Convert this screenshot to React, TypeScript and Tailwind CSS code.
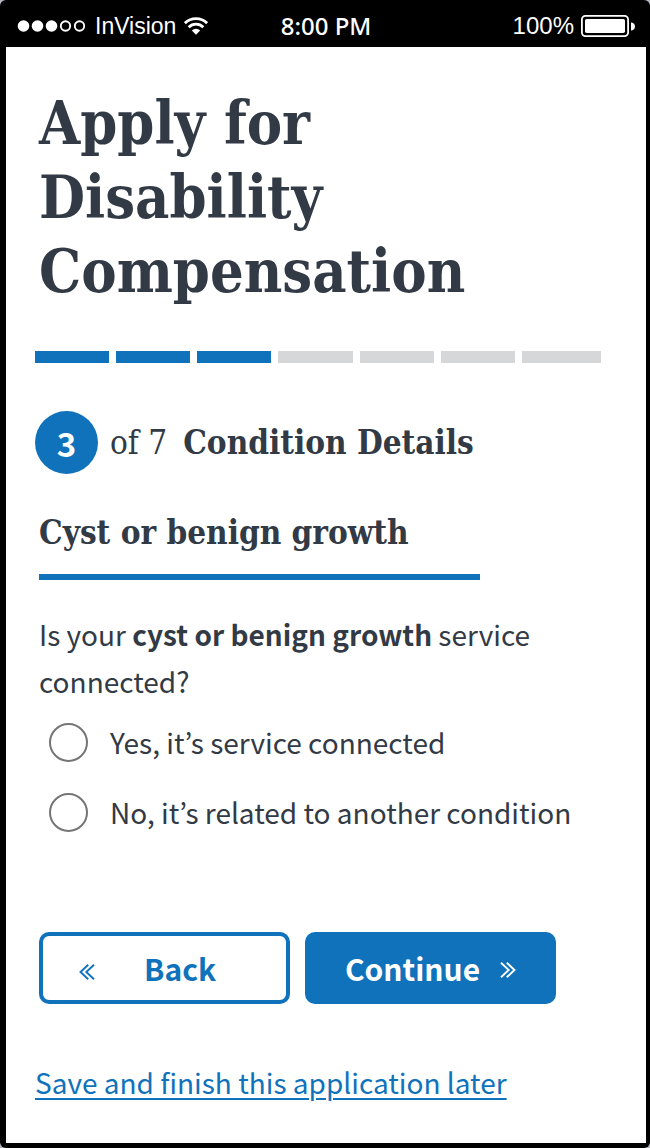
import { useState } from "react";

const TOTAL_STEPS = 7;
const CURRENT_STEP = 3;

const OPTIONS = [
  { value: "yes", label: "Yes, it’s service connected" },
  { value: "no", label: "No, it’s related to another condition" },
];

function StatusBar() {
  return (
    <header className="grid h-[47px] grid-cols-[1fr_auto_1fr] items-center pt-1 pr-[11px] pl-[11px] font-['Liberation_Sans',sans-serif] text-[24px] leading-7 text-white">
      <div className="flex items-center gap-2">
        <svg className="h-3 w-[70px]" viewBox="0 0 70 12" aria-hidden="true">
          <g fill="#fff">
            <circle cx="6.500" cy="6" r="5.800" />
            <circle cx="20.500" cy="6" r="5.800" />
            <circle cx="34.500" cy="6" r="5.800" />
          </g>
          <g fill="none" stroke="#fff" strokeWidth="1.900">
            <circle cx="48.500" cy="6" r="4.700" />
            <circle cx="62.500" cy="6" r="4.700" />
          </g>
        </svg>
        <span className="text-[23px]">InVision</span>
        <svg className="h-[18px] w-6" viewBox="0 0 24 18" aria-hidden="true">
          <g fill="none" stroke="#fff" strokeWidth="2.800">
            <path d="M0.900 6.200a15.800 15.800 0 0 1 22.200 0" />
            <path d="M4.700 10.200a10.400 10.400 0 0 1 14.600 0" />
          </g>
          <path d="M12 17.800L7.800 13.500a6 6 0 0 1 8.400 0z" fill="#fff" />
        </svg>
      </div>
      <span className="font-['Noto_Sans',sans-serif] font-medium">8:00 PM</span>
      <div className="flex items-center justify-end gap-[7px]">
        <span>100%</span>
        <svg className="h-[22px] w-[54px]" viewBox="0 0 54 22" aria-hidden="true">
          <rect x="0.900" y="0.900" width="46.200" height="20.200" rx="3.600" fill="none" stroke="#fff" strokeWidth="1.800" />
          <rect x="4" y="4" width="40" height="14" rx="1.800" fill="#fff" />
          <path d="M50 7.500c2 0 4 1.500 4 4s-2 4-4 4z" fill="#fff" />
        </svg>
      </div>
    </header>
  );
}

function ProgressBar() {
  return (
    <div
      role="progressbar"
      aria-valuemin={1}
      aria-valuemax={TOTAL_STEPS}
      aria-valuenow={CURRENT_STEP}
      className="mt-[42px] flex gap-[7px]"
    >
      {Array.from({ length: TOTAL_STEPS }, (_, i) => (
        <span
          key={i}
          className={
            i < CURRENT_STEP
              ? "h-3 flex-[74] bg-[#1072ba]"
              : "h-3 flex-[74] bg-[#d6d7d9] last:flex-[79]"
          }
        />
      ))}
    </div>
  );
}

export default function App() {
  const [answer, setAnswer] = useState("");

  return (
    <div className="bg-[#b5b8c0]">
      <div className="flex min-h-screen flex-col rounded-md bg-black pr-1 pb-[5px] pl-1.5">
        <StatusBar />
        <main className="flex-1 bg-white pt-10 pr-[45px] pb-8 pl-[29px] font-['Noto_Sans_CJK_KR',sans-serif] text-[28px] text-[#323a45]">
          <h1 className="max-w-[480px] pl-1 font-['DejaVu_Serif_Condensed','DejaVu_Serif',serif] text-[59px] leading-[74px] font-bold">
            Apply for Disability Compensation
          </h1>
          <ProgressBar />

          <div className="mt-12 flex items-center gap-3 font-['DejaVu_Serif_Condensed','DejaVu_Serif',serif] text-[33px] leading-10">
            <span className="flex size-[63px] items-center justify-center rounded-full bg-[#1072ba] font-['Noto_Sans_CJK_KR',sans-serif] font-bold text-white">
              {CURRENT_STEP}
            </span>
            <span>of {TOTAL_STEPS}</span>
            <h2 className="pl-1 font-bold">Condition Details</h2>
          </div>

          <form className="px-1" onSubmit={(e) => e.preventDefault()}>
            <h3 className="mt-[37px] w-[441px] max-w-full border-b-[6px] border-[#1072ba] pb-[19px] font-['DejaVu_Serif_Condensed','DejaVu_Serif',serif] text-[33px] leading-11 font-bold">
              Cyst or benign growth
            </h3>

            <fieldset className="mt-[31px]">
              <legend className="leading-[47px]">
                Is your <strong className="font-bold">cyst or benign growth</strong> service connected?
              </legend>
              <div className="flex flex-col gap-[31px] pt-[18px] pl-2.5">
                {OPTIONS.map((option) => (
                  <label key={option.value} className="flex items-center gap-[22px] leading-[39px]">
                    <input
                      type="radio"
                      name="service-connected"
                      value={option.value}
                      checked={answer === option.value}
                      onChange={() => setAnswer(option.value)}
                      className="size-[39px] shrink-0 appearance-none rounded-full border-2 border-[#757575] bg-white checked:border-[#1072ba] checked:bg-[#1072ba]"
                    />
                    {option.label}
                  </label>
                ))}
              </div>
            </fieldset>

            <div className="mt-[100px] flex gap-[15px] text-[30px] leading-10 font-bold">
              <button type="button" className="flex h-[72px] w-[251px] items-center rounded-[10px] border-4 border-[#1072ba] bg-white pl-9 text-[#1072ba]">
                <svg className="mt-2 h-4 w-4" viewBox="0 0 16 16" fill="none" stroke="currentColor" strokeWidth="1.900" aria-hidden="true">
                  <path d="M9.200 0.800L1.500 8l7.700 7.200M15 0.800L7.300 8l7.700 7.200" />
                </svg>
                <span className="pl-[49px]">Back</span>
              </button>
              <button type="submit" className="flex h-[72px] w-[251px] items-center justify-center gap-5 rounded-[10px] bg-[#1072ba] text-white">
                <span>Continue</span>
                <svg className="mt-1 h-4 w-4" viewBox="0 0 16 16" fill="none" stroke="currentColor" strokeWidth="1.900" aria-hidden="true">
                  <path d="M1 0.800L8.700 8L1 15.200M6.800 0.800L14.500 8l-7.700 7.200" />
                </svg>
              </button>
            </div>
          </form>

          <a href="#save" className="mt-[58px] inline-block leading-10 text-[#1072ba] underline decoration-2 underline-offset-4">
            Save and finish this application later
          </a>
        </main>
      </div>
    </div>
  );
}
